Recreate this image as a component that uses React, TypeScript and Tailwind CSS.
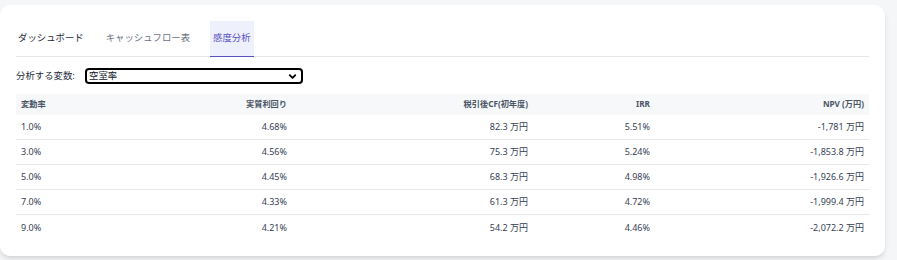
import { ChevronDown } from "lucide-react";

const rows = [
  { rate: "1.0%", yieldRate: "4.68%", cf: "82.3 万円", irr: "5.51%", npv: "-1,781 万円" },
  { rate: "3.0%", yieldRate: "4.56%", cf: "75.3 万円", irr: "5.24%", npv: "-1,853.8 万円" },
  { rate: "5.0%", yieldRate: "4.45%", cf: "68.3 万円", irr: "4.98%", npv: "-1,926.6 万円" },
  { rate: "7.0%", yieldRate: "4.33%", cf: "61.3 万円", irr: "4.72%", npv: "-1,999.4 万円" },
  { rate: "9.0%", yieldRate: "4.21%", cf: "54.2 万円", irr: "4.46%", npv: "-2,072.2 万円" },
];

const cols = "grid grid-cols-[130px_146px_241px_122px_214px]";

const App = () => {
  return (
    <div
      className="w-[897px] h-[260px] bg-[#f5f6f8] pt-[5px]"
      style={{ fontFamily: '"Noto Sans", "Noto Sans CJK JP", sans-serif' }}
    >
      <div className="w-[885px] h-[251px] bg-white rounded-[10px] shadow-md px-4 pt-4">
        {/* tabs */}
        <div className="flex gap-[18px] border-b border-gray-200 h-[36px]">
          <button className="px-[2px] flex items-center text-[9.4px] text-gray-800">ダッシュボード</button>
          <button className="px-[2px] flex items-center text-[9.4px] text-gray-500">キャッシュフロー表</button>
          <button className="px-[3px] flex items-center text-[9.4px] text-[#5a50c4] bg-[#eef0fb] border-b-[1.5px] border-[#5a50c4] -mb-px">
            感度分析
          </button>
        </div>

        {/* variable select */}
        <div className="flex items-center mt-[11px] h-[16px]">
          <span className="text-[9.4px] text-gray-800 w-[69px]">分析する変数:</span>
          <div className="w-[218px] h-[16px] border-2 border-black rounded-[4px] flex items-center justify-between pl-[2px] pr-[3px]">
            <span className="text-[9.4px] text-gray-900 leading-none">空室率</span>
            <ChevronDown className="w-[11px] h-[11px] text-black" strokeWidth={4} />
          </div>
        </div>

        {/* table */}
        <div className="mt-[10px]">
          <div className={`${cols} h-[21px] items-center bg-[#f7f8fa] text-[8.2px] font-bold text-gray-600`}>
            <div className="px-[5px]">変動率</div>
            <div className="px-[5px] text-right">実質利回り</div>
            <div className="px-[5px] text-right">税引後CF(初年度)</div>
            <div className="px-[5px] text-right">IRR</div>
            <div className="px-[5px] text-right">NPV (万円)</div>
          </div>
          <div className="divide-y divide-gray-200">
            {rows.map((r) => (
              <div key={r.rate} className={`${cols} h-[25px] items-center text-[9px] text-gray-700`}>
                <div className="px-[5px]">{r.rate}</div>
                <div className="px-[5px] text-right">{r.yieldRate}</div>
                <div className="px-[5px] text-right">{r.cf}</div>
                <div className="px-[5px] text-right">{r.irr}</div>
                <div className="px-[5px] text-right">{r.npv}</div>
              </div>
            ))}
          </div>
        </div>
      </div>
    </div>
  );
};

export default App;
